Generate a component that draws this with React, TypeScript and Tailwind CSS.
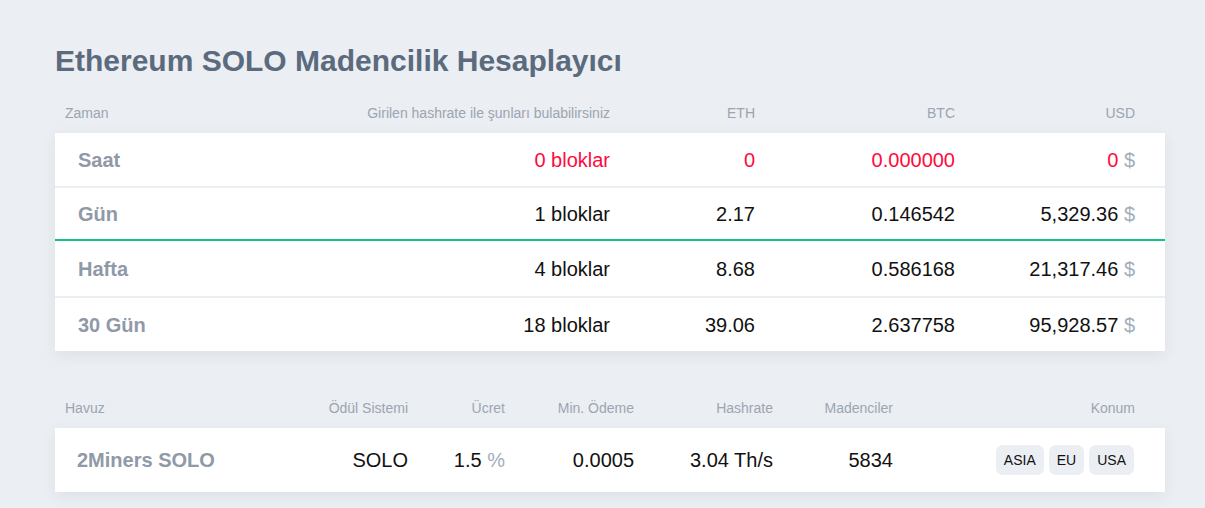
import React from "react";

const FONT = { fontFamily: '"Liberation Sans", Arial, sans-serif' };

type Row = { label: string; blocks: string; eth: string; btc: string; usd: string; red?: boolean; border: string; h: string };

const rows: Row[] = [
  { label: "Saat", blocks: "0 bloklar", eth: "0", btc: "0.000000", usd: "0", red: true, border: "border-b-2 border-[#ebeef2]", h: "h-[55px]" },
  { label: "Gün", blocks: "1 bloklar", eth: "2.17", btc: "0.146542", usd: "5,329.36", border: "border-b-2 border-[#12c27e]", h: "h-[53px]" },
  { label: "Hafta", blocks: "4 bloklar", eth: "8.68", btc: "0.586168", usd: "21,317.46", border: "border-b-2 border-[#ebeef2]", h: "h-[57px]" },
  { label: "30 Gün", blocks: "18 bloklar", eth: "39.06", btc: "2.637758", usd: "95,928.57", border: "", h: "h-[53px]" },
];

export default function App() {
  return (
    <div className="min-h-screen bg-[#ebeef2] pt-[44px] pb-[16px]" style={FONT}>
      <div className="ml-[55px] w-[1110px]">
        <h1 className="text-[30px] leading-[34px] font-bold text-[#5b6a7d]">
          Ethereum SOLO Madencilik Hesaplayıcı
        </h1>

        <div className="mt-[15px] flex h-[40px] items-center pl-[10px] pr-[30px] text-[14px] text-[#9ca5b1]">
          <div className="flex-1">Zaman</div>
          <div className="w-[300px] text-right">Girilen hashrate ile şunları bulabilirsiniz</div>
          <div className="w-[145px] text-right">ETH</div>
          <div className="w-[200px] text-right">BTC</div>
          <div className="w-[180px] text-right">USD</div>
        </div>

        <div className="bg-white shadow-[0_4px_14px_rgba(40,50,70,0.07)]">
          {rows.map((r) => (
            <div
              key={r.label}
              className={`flex items-center pl-[23px] pr-[30px] text-[20px] ${r.h} ${r.border} ${r.red ? "text-[#ff0a3c]" : "text-[#111111]"}`}
            >
              <div className="flex-1 font-bold text-[#8f99a7]">{r.label}</div>
              <div className="w-[300px] text-right">{r.blocks}</div>
              <div className="w-[145px] text-right">{r.eth}</div>
              <div className="w-[200px] text-right">{r.btc}</div>
              <div className="w-[180px] text-right">
                {r.usd} <span className="text-[#a3adba]">$</span>
              </div>
            </div>
          ))}
        </div>

        <div className="mt-[37px] flex h-[40px] items-center pl-[10px] pr-[30px] text-[14px] text-[#9ca5b1]">
          <div className="flex-1">Havuz</div>
          <div className="w-[150px] text-right">Ödül Sistemi</div>
          <div className="w-[97px] text-right">Ücret</div>
          <div className="w-[129px] text-right">Min. Ödeme</div>
          <div className="w-[139px] text-right">Hashrate</div>
          <div className="w-[120px] text-right">Madenciler</div>
          <div className="w-[242px] text-right">Konum</div>
        </div>

        <div className="flex h-[64px] items-center bg-white pl-[22px] pr-[30px] text-[20px] text-[#111111] shadow-[0_4px_14px_rgba(40,50,70,0.07)]">
          <div className="flex-1 font-bold text-[#8f99a7]">2Miners SOLO</div>
          <div className="w-[150px] text-right">SOLO</div>
          <div className="w-[97px] text-right">
            1.5 <span className="text-[#a3adba]">%</span>
          </div>
          <div className="w-[129px] text-right">0.0005</div>
          <div className="w-[139px] text-right">3.04 Th/s</div>
          <div className="w-[120px] text-right">5834</div>
          <div className="flex w-[242px] justify-end gap-[5px] pr-[1px]">
            {["ASIA", "EU", "USA"].map((b) => (
              <span key={b} className="flex h-[30px] items-center rounded-[7px] bg-[#ebeef2] px-[8px] text-[14px] text-[#111111]">
                {b}
              </span>
            ))}
          </div>
        </div>
      </div>
    </div>
  );
}
